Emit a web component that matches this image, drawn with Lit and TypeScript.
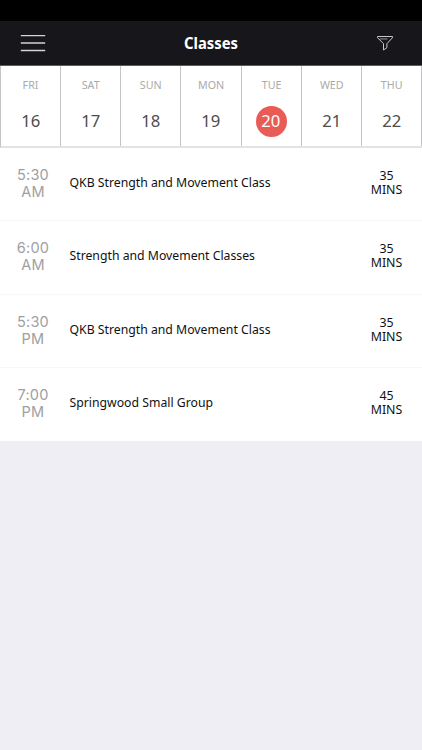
import { LitElement, html, css } from "lit";
import { customElement, state } from "lit/decorators.js";
import { classMap } from "lit/directives/class-map.js";

interface Day { name: string; date: number }
interface Session { time: string; half: string; title: string; mins: number }

const DAYS: Day[] = [
  { name: "FRI", date: 16 }, { name: "SAT", date: 17 }, { name: "SUN", date: 18 },
  { name: "MON", date: 19 }, { name: "TUE", date: 20 }, { name: "WED", date: 21 },
  { name: "THU", date: 22 },
];

const SESSIONS: Session[] = [
  { time: "5:30", half: "AM", title: "QKB Strength and Movement Class", mins: 35 },
  { time: "6:00", half: "AM", title: "Strength and Movement Classes", mins: 35 },
  { time: "5:30", half: "PM", title: "QKB Strength and Movement Class", mins: 35 },
  { time: "7:00", half: "PM", title: "Springwood Small Group", mins: 45 },
];

@customElement("app-root")
export class AppRoot extends LitElement {
  @state() private selected = 20;

  static styles = css`
    :host { display: block; height: 750px; background: #efeef4; font-family: "Noto Sans", "Open Sans", sans-serif; overflow: hidden; }
    .status { height: 21px; background: #000; }
    .bar { height: 44px; background: #17161b; display: grid; grid-template-columns: 72px 1fr 72px; align-items: center; border-bottom: 1px solid #5c5b5f; box-sizing: content-box; }
    .icon { display: block; }
    .menu { margin-left: 20px; }
    .filter { margin-left: 26px; }
    .title { color: #fff; font-size: 16px; font-weight: 700; text-align: center; line-height: 22px; transform: scaleX(0.925); }
    .week { display: grid; grid-template-columns: repeat(7, 1fr); height: 80px; background: #fff; border-bottom: 2px solid #e3e3e5; border-left: 1px solid #c4c4c7; }
    .day { display: flex; flex-direction: column; align-items: center; border-right: 1px solid #c4c4c7; }
    .name { color: #aaa; font-size: 11.5px; line-height: 16px; margin-top: 11px; transform: scaleX(0.93); }
    .date { width: 31px; height: 31px; border-radius: 50%; margin-top: 13px; display: flex; align-items: center; justify-content: center; color: #4d4d4d; font-size: 17px; line-height: 30px; }
    .num { transform: translateY(-1px) scaleX(0.98); }
    .on { background: #e95b55; color: #fff; }
    .list { background: #fff; }
    .row { height: 73.25px; box-sizing: border-box; display: grid; grid-template-columns: 66px 1fr 71px; align-items: center; border-bottom: 1px solid #f8f8f9; }
    .row:last-child { border-bottom-color: #fff; }
    .time { color: #a0a0a3; font: 14.5px/17px Inter, sans-serif; letter-spacing: 0.2px; text-align: center; padding-bottom: 2px; }
    .label { color: #111; font-size: 13px; line-height: 18px; padding: 0 0 4px 3px; white-space: nowrap; transform: translateX(0.5px) scaleX(0.942); transform-origin: 3px 50%; }
    .mins { color: #111; font-size: 13px; line-height: 14px; text-align: center; padding-bottom: 4px; transform: scaleX(0.95); }
  `;

  render() {
    return html`
      <div class="status"></div>
      <header class="bar">
        <svg class="icon menu" width="26" height="18" viewBox="0 0 26 18" fill="none" stroke="#d4d4d6" stroke-width="1.3">
          <path d="M.8 1.7H25.2M.8 9H25.2M.8 16.5H25.2" />
        </svg>
        <div class="title">Classes</div>
        <svg class="icon filter" width="18" height="16" viewBox="0 0 18 16" fill="none" stroke="#c9c9cc" stroke-width="1" stroke-linejoin="round">
          <path d="M1.5 1.5H16.5V2.7L10.9 8.7V12.7L7.5 15V8.7L1.5 2.7Z" />
          <path d="M4 3.9H11.5" stroke-width="1.2" opacity=".6" />
        </svg>
      </header>
      <nav class="week">
        ${DAYS.map((d) => html`
          <div class="day" @click=${() => (this.selected = d.date)}>
            <span class="name">${d.name}</span>
            <span class=${classMap({ date: true, on: d.date === this.selected })}><span class="num">${d.date}</span></span>
          </div>`)}
      </nav>
      <main class="list">
        ${SESSIONS.map((s) => html`
          <div class="row">
            <div class="time">${s.time}<br />${s.half}</div>
            <div class="label">${s.title}</div>
            <div class="mins">${s.mins}<br />MINS</div>
          </div>`)}
      </main>`;
  }
}
